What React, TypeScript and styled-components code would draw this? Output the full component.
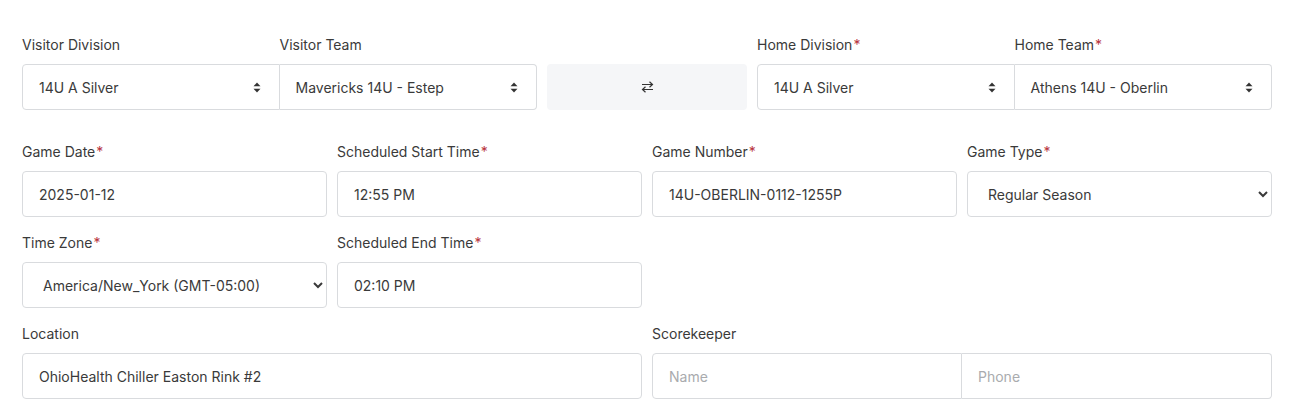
import React from "react";
import styled, { createGlobalStyle } from "styled-components";

const Global = createGlobalStyle`
  * { box-sizing: border-box; }
  body {
    margin: 0;
    background: #ffffff;
    font-family: "Inter", "Noto Sans", sans-serif;
    color: #333333;
  }
`;

const Page = styled.div`
  padding: 34px 25px 0 22px;
  display: flex;
  flex-direction: column;
`;

const Row = styled.div<{ $extra?: number }>`
  display: grid;
  grid-template-columns: repeat(12, 1fr);
  column-gap: 10px;
  margin-bottom: ${(p) => 15 + (p.$extra || 0)}px;
`;

const Field = styled.div<{ $span: number }>`
  display: flex;
  flex-direction: column;
  grid-column: span ${(p) => p.$span};
  min-width: 0;
`;

const Label = styled.label`
  font-size: 14px;
  line-height: 21px;
  color: #3a3a3a;
  margin-bottom: 9px;
  height: 21px;
`;

const Req = styled.span`
  color: #b8343c;
  margin-left: 1px;
`;

const Group = styled.div`
  display: grid;
  grid-template-columns: 1fr 1fr;
  grid-template-rows: auto 46px;
`;

const InputGroup = styled.div`
  display: grid;
  grid-template-columns: 1fr 1fr;
  height: 46px;
`;

const GroupPart = styled.div<{ $pos: "left" | "right" }>`
  display: flex;
  align-items: center;
  justify-content: space-between;
  border: 1px solid #d9dbde;
  ${(p) =>
    p.$pos === "left"
      ? "border-radius: 4px 0 0 4px;"
      : "border-radius: 0 4px 4px 0; border-left: none;"}
  padding: 0 18px 0 16px;
  font-size: 14px;
  color: #3a3a3a;
  background: #fff;
`;

const GroupInput = styled.input<{ $pos: "left" | "right" }>`
  height: 46px;
  border: 1px solid #d9dbde;
  ${(p) =>
    p.$pos === "left"
      ? "border-radius: 4px 0 0 4px;"
      : "border-radius: 0 4px 4px 0; border-left: none;"}
  padding: 0 16px;
  font-family: inherit;
  font-size: 14px;
  color: #3a3a3a;
  outline: none;
  min-width: 0;
  &::placeholder {
    color: #a9abae;
  }
`;

const SwapButton = styled.button`
  grid-column: span 2;
  margin-top: 30px;
  height: 46px;
  border: none;
  border-radius: 4px;
  background: #f5f6f8;
  display: flex;
  align-items: center;
  justify-content: center;
  cursor: pointer;
`;

const Input = styled.input`
  height: 46px;
  border: 1px solid #d9dbde;
  border-radius: 4px;
  padding: 0 16px;
  font-family: inherit;
  font-size: 14px;
  color: #3a3a3a;
  outline: none;
  width: 100%;
`;

const Select = styled.select`
  height: 46px;
  border: 1px solid #d9dbde;
  border-radius: 4px;
  padding: 0 6px 0 16px;
  font-family: inherit;
  font-size: 14px;
  color: #3a3a3a;
  background: #fff;
  outline: none;
  width: 100%;
`;

const SortIcon = () => (
  <svg width="8" height="11" viewBox="0 0 8 11">
    <path d="M4 0.5 L7.5 4.3 H0.5 Z" fill="#333" />
    <path d="M4 10.5 L7.5 6.7 H0.5 Z" fill="#333" />
  </svg>
);

const SwapIcon = () => (
  <svg width="13" height="12" viewBox="0 0 13 12">
    <path d="M1 3.5 H11.5 M8.5 0.8 L11.5 3.5 L8.5 6.2" fill="none" stroke="#333" strokeWidth="1.2" />
    <path d="M12 8.5 H1.5 M4.5 5.8 L1.5 8.5 L4.5 11.2" fill="none" stroke="#333" strokeWidth="1.2" />
  </svg>
);

export default function App() {
  return (
    <>
      <Global />
      <Page>
        <Row $extra={16}>
          <Field $span={5}>
            <Group>
              <Label>Visitor Division</Label>
              <Label>Visitor Team</Label>
              <GroupPart $pos="left">
                14U A Silver
                <SortIcon />
              </GroupPart>
              <GroupPart $pos="right">
                Mavericks 14U - Estep
                <SortIcon />
              </GroupPart>
            </Group>
          </Field>
          <SwapButton type="button" aria-label="Swap teams">
            <SwapIcon />
          </SwapButton>
          <Field $span={5}>
            <Group>
              <Label>
                Home Division<Req>*</Req>
              </Label>
              <Label>
                Home Team<Req>*</Req>
              </Label>
              <GroupPart $pos="left">
                14U A Silver
                <SortIcon />
              </GroupPart>
              <GroupPart $pos="right">
                Athens 14U - Oberlin
                <SortIcon />
              </GroupPart>
            </Group>
          </Field>
        </Row>

        <Row>
          <Field $span={3}>
            <Label>
              Game Date<Req>*</Req>
            </Label>
            <Input defaultValue="2025-01-12" />
          </Field>
          <Field $span={3}>
            <Label>
              Scheduled Start Time<Req>*</Req>
            </Label>
            <Input defaultValue="12:55 PM" />
          </Field>
          <Field $span={3}>
            <Label>
              Game Number<Req>*</Req>
            </Label>
            <Input defaultValue="14U-OBERLIN-0112-1255P" />
          </Field>
          <Field $span={3}>
            <Label>
              Game Type<Req>*</Req>
            </Label>
            <Select defaultValue="Regular Season">
              <option>Regular Season</option>
              <option>Playoff</option>
              <option>Exhibition</option>
            </Select>
          </Field>
        </Row>

        <Row>
          <Field $span={3}>
            <Label>
              Time Zone<Req>*</Req>
            </Label>
            <Select defaultValue="ny">
              <option value="ny">America/New_York (GMT-05:00)</option>
              <option value="chi">America/Chicago (GMT-06:00)</option>
            </Select>
          </Field>
          <Field $span={3}>
            <Label>
              Scheduled End Time<Req>*</Req>
            </Label>
            <Input defaultValue="02:10 PM" />
          </Field>
        </Row>

        <Row>
          <Field $span={6}>
            <Label>Location</Label>
            <Input defaultValue="OhioHealth Chiller Easton Rink #2" />
          </Field>
          <Field $span={6}>
            <Label>Scorekeeper</Label>
            <InputGroup>
              <GroupInput $pos="left" placeholder="Name" />
              <GroupInput $pos="right" placeholder="Phone" />
            </InputGroup>
          </Field>
        </Row>
      </Page>
    </>
  );
}
